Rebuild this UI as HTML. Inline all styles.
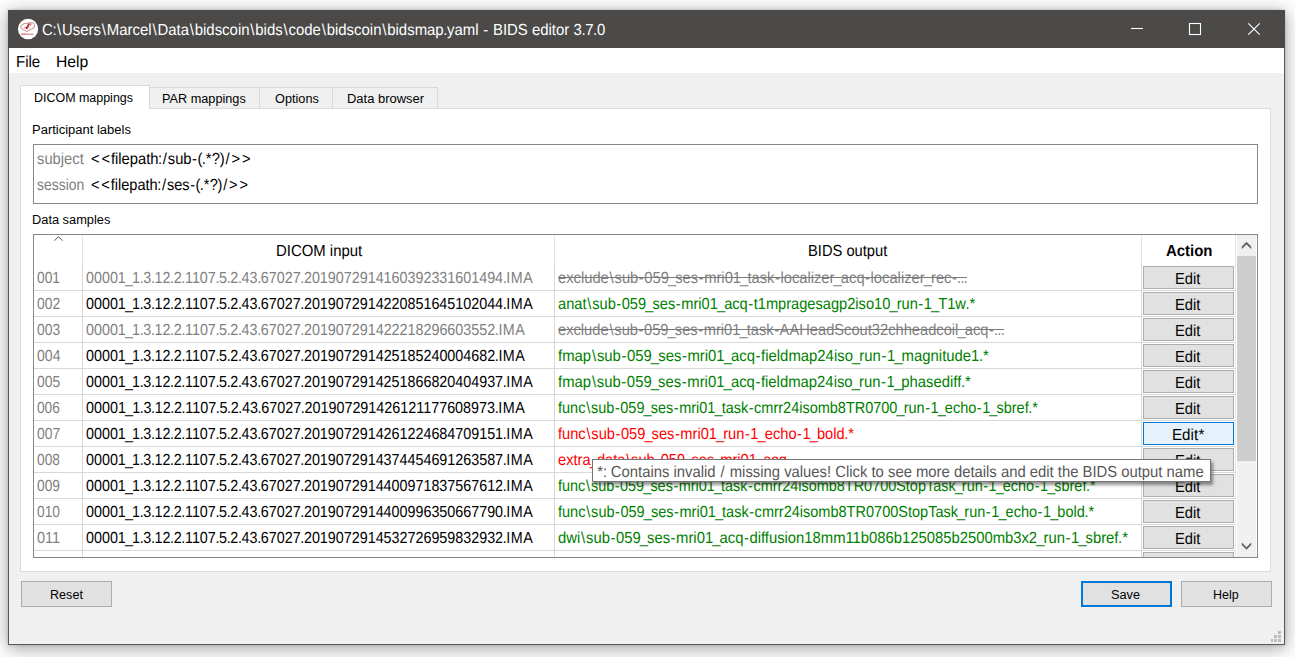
<!DOCTYPE html>
<html><head><meta charset="utf-8"><title>BIDS editor</title>
<style>
html,body{margin:0;padding:0;}
body{width:1295px;height:657px;overflow:hidden;background:#fff;position:relative;font-family:"Liberation Sans",sans-serif;}
.a{position:absolute;}
.t{position:absolute;white-space:nowrap;z-index:2;transform-origin:0 0;}
#win{left:8px;top:10px;width:1275px;height:633px;border:1px solid #5a5957;background:#f0f0f0;box-shadow:0 3px 17px 1px rgba(0,0,0,.34),0 0 3px rgba(0,0,0,.18);}
#tbar{left:8px;top:10px;width:1277px;height:38px;background:#4b4a48;}
#mbar{left:9px;top:48px;width:1275px;height:25px;background:#fff;}
#pane{left:20px;top:108px;width:1249px;height:462px;border:1px solid #dadada;background:#fff;}
.tab{background:#f0f0f0;border:1px solid #d9d9d9;border-bottom:none;box-sizing:border-box;}
#tabA{left:20px;top:85px;width:130px;height:24px;background:#fff;border:1px solid #d9d9d9;border-bottom:none;box-sizing:border-box;z-index:1;}
#pframe{left:33px;top:144px;width:1223px;height:58px;border:1px solid #828790;background:#fff;}
#tframe{left:33px;top:234px;width:1223px;height:322px;border:1px solid #828790;background:#fff;overflow:hidden;}
.hl{position:absolute;left:0;width:1201px;height:1px;background:#d8d8d8;}
.vl{position:absolute;top:30px;width:1px;height:300px;background:#d8d8d8;}
.vh{position:absolute;top:0;width:1px;height:30px;background:#e5e5e5;}
.eb{position:absolute;left:1109px;width:89px;height:21px;border:1px solid #adadad;background:#e1e1e1;}
.btn{border:1px solid #adadad;background:#e1e1e1;box-sizing:border-box;}
#tip{left:592px;top:459px;width:617px;height:21px;border:1px solid #767676;background:#fff;z-index:5;box-shadow:2px 3px 3px rgba(0,0,0,.42);}
#tip_t{z-index:6;}
#title{left:42.30px;top:18px;height:26px;line-height:26px;font-size:16px;color:#fff;transform:scaleX(0.9327);text-rendering:geometricPrecision;}
#mfile{left:16.48px;top:50px;height:26px;line-height:26px;font-size:16px;color:#000;transform:scaleX(0.9384);text-rendering:geometricPrecision;}
#mhelp{left:55.80px;top:50px;height:26px;line-height:26px;font-size:16px;color:#000;transform:scaleX(0.983);text-rendering:geometricPrecision;}
#tab1{left:34.40px;top:88px;height:21px;line-height:21px;font-size:12px;color:#000;transform:scaleX(1.0377);}
#tab2{left:162.20px;top:89px;height:21px;line-height:21px;font-size:12px;color:#000;transform:scaleX(1.0582);}
#tab3{left:274.96px;top:89px;height:21px;line-height:21px;font-size:12px;color:#000;transform:scaleX(1.0591);}
#tab4{left:347.30px;top:89px;height:21px;line-height:21px;font-size:12px;color:#000;transform:scaleX(1.0808);}
#plabel{left:32.30px;top:120px;height:21px;line-height:21px;font-size:12px;color:#000;transform:scaleX(1.0822);}
#dlabel{left:32.30px;top:210px;height:21px;line-height:21px;font-size:12px;color:#000;transform:scaleX(1.0676);}
#subj{left:36.76px;top:147px;height:26px;line-height:26px;font-size:16px;color:#808080;transform:scaleX(0.9229);text-rendering:geometricPrecision;}
#subjv{left:89.60px;top:147px;height:26px;line-height:26px;font-size:16px;color:#000;transform:scaleX(0.9217);text-rendering:geometricPrecision;}
#sess{left:36.80px;top:173px;height:26px;line-height:26px;font-size:16px;color:#808080;transform:scaleX(0.8715);text-rendering:geometricPrecision;}
#sessv{left:89.60px;top:173px;height:26px;line-height:26px;font-size:16px;color:#000;transform:scaleX(0.9116);text-rendering:geometricPrecision;}
#h1{left:275.88px;top:239px;height:26px;line-height:26px;font-size:16px;color:#000;transform:scaleX(0.932);text-rendering:geometricPrecision;}
#h2{left:807.89px;top:239px;height:26px;line-height:26px;font-size:16px;color:#000;transform:scaleX(0.9184);text-rendering:geometricPrecision;}
#h3{left:1166.13px;top:239px;height:26px;line-height:26px;font-size:16px;color:#000;transform:scaleX(0.934);font-weight:bold;text-rendering:geometricPrecision;}
#n001{left:36.93px;top:266px;height:26px;line-height:26px;font-size:16px;color:#808080;transform:scaleX(0.8593);text-rendering:geometricPrecision;}
#d001{left:85.69px;top:266px;height:26px;line-height:26px;font-size:16px;color:#808080;transform:scaleX(0.8951);text-rendering:geometricPrecision;}
#b001{left:558.02px;top:266px;height:26px;line-height:26px;font-size:16px;color:#808080;transform:scaleX(0.9209);text-rendering:geometricPrecision;}
#e001{left:1174.79px;top:267px;height:26px;line-height:26px;font-size:16px;color:#000;transform:scaleX(0.9186);text-rendering:geometricPrecision;}
#n002{left:36.93px;top:292px;height:26px;line-height:26px;font-size:16px;color:#808080;transform:scaleX(0.8649);text-rendering:geometricPrecision;}
#d002{left:85.69px;top:292px;height:26px;line-height:26px;font-size:16px;color:#000;transform:scaleX(0.8951);text-rendering:geometricPrecision;}
#b002{left:557.99px;top:292px;height:26px;line-height:26px;font-size:16px;color:#008000;transform:scaleX(0.9146);text-rendering:geometricPrecision;}
#e002{left:1174.79px;top:293px;height:26px;line-height:26px;font-size:16px;color:#000;transform:scaleX(0.9186);text-rendering:geometricPrecision;}
#n003{left:36.93px;top:318px;height:26px;line-height:26px;font-size:16px;color:#808080;transform:scaleX(0.8645);text-rendering:geometricPrecision;}
#d003{left:85.69px;top:318px;height:26px;line-height:26px;font-size:16px;color:#808080;transform:scaleX(0.8952);text-rendering:geometricPrecision;}
#b003{left:558.02px;top:318px;height:26px;line-height:26px;font-size:16px;color:#808080;transform:scaleX(0.9176);text-rendering:geometricPrecision;}
#e003{left:1174.79px;top:319px;height:26px;line-height:26px;font-size:16px;color:#000;transform:scaleX(0.9186);text-rendering:geometricPrecision;}
#n004{left:36.90px;top:344px;height:26px;line-height:26px;font-size:16px;color:#808080;transform:scaleX(0.8792);text-rendering:geometricPrecision;}
#d004{left:85.69px;top:344px;height:26px;line-height:26px;font-size:16px;color:#000;transform:scaleX(0.8952);text-rendering:geometricPrecision;}
#b004{left:558.04px;top:344px;height:26px;line-height:26px;font-size:16px;color:#008000;transform:scaleX(0.93);text-rendering:geometricPrecision;}
#e004{left:1174.79px;top:345px;height:26px;line-height:26px;font-size:16px;color:#000;transform:scaleX(0.9186);text-rendering:geometricPrecision;}
#n005{left:36.93px;top:370px;height:26px;line-height:26px;font-size:16px;color:#808080;transform:scaleX(0.8649);text-rendering:geometricPrecision;}
#d005{left:85.69px;top:370px;height:26px;line-height:26px;font-size:16px;color:#000;transform:scaleX(0.8951);text-rendering:geometricPrecision;}
#b005{left:558.04px;top:370px;height:26px;line-height:26px;font-size:16px;color:#008000;transform:scaleX(0.9291);text-rendering:geometricPrecision;}
#e005{left:1174.79px;top:371px;height:26px;line-height:26px;font-size:16px;color:#000;transform:scaleX(0.9186);text-rendering:geometricPrecision;}
#n006{left:36.93px;top:396px;height:26px;line-height:26px;font-size:16px;color:#808080;transform:scaleX(0.8566);text-rendering:geometricPrecision;}
#d006{left:85.69px;top:396px;height:26px;line-height:26px;font-size:16px;color:#000;transform:scaleX(0.8973);text-rendering:geometricPrecision;}
#b006{left:558.06px;top:396px;height:26px;line-height:26px;font-size:16px;color:#008000;transform:scaleX(0.9054);text-rendering:geometricPrecision;}
#e006{left:1174.79px;top:397px;height:26px;line-height:26px;font-size:16px;color:#000;transform:scaleX(0.9186);text-rendering:geometricPrecision;}
#n007{left:36.93px;top:422px;height:26px;line-height:26px;font-size:16px;color:#808080;transform:scaleX(0.8649);text-rendering:geometricPrecision;}
#d007{left:85.69px;top:422px;height:26px;line-height:26px;font-size:16px;color:#000;transform:scaleX(0.8951);text-rendering:geometricPrecision;}
#b007{left:558.04px;top:422px;height:26px;line-height:26px;font-size:16px;color:#ff0000;transform:scaleX(0.9142);text-rendering:geometricPrecision;}
#e007{left:1172.05px;top:423px;height:26px;line-height:26px;font-size:16px;color:#000;transform:scaleX(0.9467);text-rendering:geometricPrecision;}
#n008{left:36.93px;top:448px;height:26px;line-height:26px;font-size:16px;color:#808080;transform:scaleX(0.8595);text-rendering:geometricPrecision;}
#d008{left:85.69px;top:448px;height:26px;line-height:26px;font-size:16px;color:#000;transform:scaleX(0.8951);text-rendering:geometricPrecision;}
#b008{left:558.02px;top:448px;height:26px;line-height:26px;font-size:16px;color:#ff0000;transform:scaleX(0.9155);text-rendering:geometricPrecision;}
#e008{left:1174.79px;top:449px;height:26px;line-height:26px;font-size:16px;color:#000;transform:scaleX(0.9186);text-rendering:geometricPrecision;}
#n009{left:36.93px;top:474px;height:26px;line-height:26px;font-size:16px;color:#808080;transform:scaleX(0.8602);text-rendering:geometricPrecision;}
#d009{left:85.69px;top:474px;height:26px;line-height:26px;font-size:16px;color:#000;transform:scaleX(0.8951);text-rendering:geometricPrecision;}
#b009{left:558.06px;top:474px;height:26px;line-height:26px;font-size:16px;color:#008000;transform:scaleX(0.9022);text-rendering:geometricPrecision;}
#e009{left:1174.79px;top:475px;height:26px;line-height:26px;font-size:16px;color:#000;transform:scaleX(0.9186);text-rendering:geometricPrecision;}
#n010{left:36.93px;top:500px;height:26px;line-height:26px;font-size:16px;color:#808080;transform:scaleX(0.8606);text-rendering:geometricPrecision;}
#d010{left:85.69px;top:500px;height:26px;line-height:26px;font-size:16px;color:#000;transform:scaleX(0.8951);text-rendering:geometricPrecision;}
#b010{left:558.06px;top:500px;height:26px;line-height:26px;font-size:16px;color:#008000;transform:scaleX(0.9077);text-rendering:geometricPrecision;}
#e010{left:1174.79px;top:501px;height:26px;line-height:26px;font-size:16px;color:#000;transform:scaleX(0.9186);text-rendering:geometricPrecision;}
#n011{left:36.89px;top:526px;height:26px;line-height:26px;font-size:16px;color:#808080;transform:scaleX(0.9071);text-rendering:geometricPrecision;}
#d011{left:85.69px;top:526px;height:26px;line-height:26px;font-size:16px;color:#000;transform:scaleX(0.8951);text-rendering:geometricPrecision;}
#b011{left:558.02px;top:526px;height:26px;line-height:26px;font-size:16px;color:#008000;transform:scaleX(0.9256);text-rendering:geometricPrecision;}
#e011{left:1174.79px;top:527px;height:26px;line-height:26px;font-size:16px;color:#000;transform:scaleX(0.9186);text-rendering:geometricPrecision;}
#reset{left:49.50px;top:585px;height:21px;line-height:21px;font-size:12px;color:#000;transform:scaleX(1.0488);}
#save{left:1111.40px;top:585px;height:21px;line-height:21px;font-size:12px;color:#000;transform:scaleX(1.0597);}
#help{left:1213.20px;top:585px;height:21px;line-height:21px;font-size:12px;color:#000;transform:scaleX(1.0361);}
#tip_t{left:597.34px;top:460px;height:26px;line-height:26px;font-size:16px;color:#575757;transform:scaleX(0.9268);text-rendering:geometricPrecision;}
.t i{font-style:normal}.w5{letter-spacing:.5px}.k12{margin:0 0.6px}.k18{margin:0 0.9px}.k20{margin:0 1.0px}.k6{margin:0 0.3px}.m20{margin:0 -1.0px}.m4{margin:0 -0.2px}.m8{margin:0 -0.4px}
</style></head><body>
<div id="win" class="a"></div>
<div id="tbar" class="a"></div>
<div id="mbar" class="a"></div>

<!-- title icon -->
<svg class="a" style="left:17px;top:18px" width="22" height="22" viewBox="0 0 22 22">
 <ellipse cx="11.05" cy="10.95" rx="10.1" ry="10.3" fill="#fff"/>
 <g transform="translate(10.6,5.6) scale(.91,.92) translate(-10.6,-4.8)"><path d="M3.4 7.600C4.200 5.800 6.200 5 8.100 4.700C10.500 4.100 13.400 3.900 15.700 4C17.200 4.100 17.900 4.800 17.900 5.600C18.200 6.700 18.300 7.900 18 9C15.400 10.700 12.300 12 9.500 13.400C8.900 13.200 8.500 12.700 7.900 12.300C6.200 11.600 4.300 10.700 3.400 9.400C3.100 8.800 3.200 8.100 3.400 7.600Z" fill="#fff" stroke="#b84848" stroke-width=".75" stroke-linejoin="round"/>
 <path d="M9.300 10l2.700-4.600" stroke="#ad1a1a" stroke-width="1.700" stroke-linecap="round" fill="none"/>
 <path d="M7.300 9.300l1.200-.3M10.400 10.200l1.600-2.200M13.600 6.800l1-.9M12.900 5.600l1.200-.3" stroke="#c0392b" stroke-width=".8" stroke-linecap="round" fill="none"/></g>
 <text x="4.200" y="16.800" font-family="Liberation Sans, sans-serif" font-weight="bold" font-size="2.500" text-rendering="geometricPrecision" textLength="12.600" lengthAdjust="spacingAndGlyphs" fill="#c62828">BIDScoin</text>
</svg>

<!-- caption buttons -->
<svg class="a" style="left:1120px;top:10px" width="165" height="38" viewBox="0 0 165 38">
 <path d="M11 18.500h12" stroke="#fff" stroke-width="1.100"/>
 <rect x="69.500" y="13.500" width="11" height="11" fill="none" stroke="#fff" stroke-width="1.100"/>
 <path d="M128.300 13.300l11.400 11.400M139.700 13.300l-11.400 11.400" stroke="#fff" stroke-width="1.150"/>
</svg>

<!-- tabs -->
<div class="a tab" style="left:149px;top:87px;width:111px;height:22px"></div>
<div class="a tab" style="left:259px;top:87px;width:74px;height:22px"></div>
<div class="a tab" style="left:332px;top:87px;width:106px;height:22px"></div>
<div id="pane" class="a"></div>
<div id="tabA" class="a"></div>

<div id="pframe" class="a"></div>

<div id="tframe" class="a">
 <!-- header separators -->
 <div class="vh" style="left:48px"></div><div class="vh" style="left:520px"></div><div class="vh" style="left:1107px"></div>
 <div class="vl" style="left:48px"></div><div class="vl" style="left:520px"></div><div class="vl" style="left:1107px"></div>
 <div class="vl" style="left:1201px;top:0;height:322px;background:#e5e5e5"></div>
 <div class="hl" style="top:55px"></div>
<div class="hl" style="top:81px"></div>
<div class="hl" style="top:107px"></div>
<div class="hl" style="top:133px"></div>
<div class="hl" style="top:159px"></div>
<div class="hl" style="top:185px"></div>
<div class="hl" style="top:211px"></div>
<div class="hl" style="top:237px"></div>
<div class="hl" style="top:263px"></div>
<div class="hl" style="top:289px"></div>
<div class="hl" style="top:315px"></div>
<div class="eb" style="top:31px"></div>
<div class="eb" style="top:57px"></div>
<div class="eb" style="top:83px"></div>
<div class="eb" style="top:109px"></div>
<div class="eb" style="top:135px"></div>
<div class="eb" style="top:161px"></div>
<div class="eb" style="top:187px;background:#e5f1fb;border-color:#0078d7"></div>
<div class="eb" style="top:213px"></div>
<div class="eb" style="top:239px"></div>
<div class="eb" style="top:265px"></div>
<div class="eb" style="top:291px"></div>
<div class="eb" style="top:317px"></div>
 <!-- sort arrow -->
 <svg class="a" style="left:18px;top:0" width="14" height="8" viewBox="0 0 14 8"><path d="M2.500 5.700l4-4 4 4" fill="none" stroke="#4a4a4a" stroke-width="1"/></svg>
 <!-- scrollbar -->
 <div class="a" style="left:1203px;top:0;width:19px;height:322px;background:#f0f0f0"></div>
 <div class="a" style="left:1203px;top:21px;width:19px;height:205px;background:#cdcdcd"></div>
 <svg class="a" style="left:1203px;top:0" width="19" height="21" viewBox="0 0 19 21"><path d="M4.800 14.100V11.500L9.500 6.800L14.200 11.500V14.100L9.500 9.400Z" fill="#606060"/></svg>
 <svg class="a" style="left:1203px;top:301px" width="19" height="21" viewBox="0 0 19 21"><path d="M4.800 6.500L9.500 11.200L14.200 6.500V9.100L9.500 13.800L4.800 9.100Z" fill="#606060"/></svg>
</div>

<!-- bottom buttons -->
<div class="a btn" style="left:21px;top:581px;width:91px;height:26px"></div>
<div class="a btn" style="left:1081px;top:581px;width:91px;height:26px;border:2px solid #0078d7"></div>
<div class="a btn" style="left:1181px;top:581px;width:91px;height:26px"></div>

<!-- size grip -->
<svg class="a" style="left:1270px;top:631px" width="11" height="11" viewBox="0 0 11 11" fill="#bcbcbc">
 <rect x="8" y="0" width="3" height="3"/><rect x="4" y="4" width="3" height="3"/><rect x="8" y="4" width="3" height="3"/>
 <rect x="1" y="8" width="2" height="3"/><rect x="4" y="8" width="3" height="3"/><rect x="8" y="8" width="3" height="3"/>
</svg>

<!-- strike-through lines for excluded rows -->
<div class="a" style="left:558px;top:277px;width:409px;height:1px;background:#7a7a7a;z-index:3"></div>
<div class="a" style="left:558px;top:329px;width:446px;height:1px;background:#7a7a7a;z-index:3"></div>

<!-- tooltip -->
<div id="tip" class="a"></div>

<span class="t" id="title">C<i class="m8">:</i><i class="k18">\</i>Users<i class="k18">\</i>Marcel<i class="k18">\</i>Data<i class="k18">\</i>bidscoin<i class="k18">\</i>bids<i class="k18">\</i>code<i class="k18">\</i>bidscoin<i class="k18">\</i>bidsmap<i class="m8">.</i>yaml <i class="k12">-</i> BIDS editor 3<i class="m8">.</i>7<i class="m8">.</i>0</span>
<span class="t" id="mfile">File</span>
<span class="t" id="mhelp">Help</span>
<span class="t" id="tab1">DICOM mappings</span>
<span class="t" id="tab2">PAR mappings</span>
<span class="t" id="tab3">Options</span>
<span class="t" id="tab4">Data browser</span>
<span class="t" id="plabel">Participant labels</span>
<span class="t" id="dlabel">Data samples</span>
<span class="t" id="subj">subject</span>
<span class="t" id="subjv"><i class="k20">&lt;</i><i class="k20">&lt;</i>filepath<i class="m8">:</i><i class="k20">/</i>sub<i class="k12">-</i><i class="m4">(</i><i class="m8">.</i><i class="k6">*</i>?<i class="m4">)</i><i class="k20">/</i><i class="k20">&gt;</i><i class="k20">&gt;</i></span>
<span class="t" id="sess">session</span>
<span class="t" id="sessv"><i class="k20">&lt;</i><i class="k20">&lt;</i>filepath<i class="m8">:</i><i class="k20">/</i>ses<i class="k12">-</i><i class="m4">(</i><i class="m8">.</i><i class="k6">*</i>?<i class="m4">)</i><i class="k20">/</i><i class="k20">&gt;</i><i class="k20">&gt;</i></span>
<span class="t" id="h1">DICOM input</span>
<span class="t" id="h2">BIDS output</span>
<span class="t" id="h3">Action</span>
<span class="t" id="n001">001</span>
<span class="t" id="d001">00001<i class="m20">_</i>1<i class="m8">.</i>3<i class="m8">.</i>12<i class="m8">.</i>2<i class="m8">.</i>1107<i class="m8">.</i>5<i class="m8">.</i>2<i class="m8">.</i>43<i class="m8">.</i>67027<i class="m8">.</i>2019072914160392331601494<i class="m8">.</i><i class="w5">IMA</i></span>
<span class="t" id="b001">exclude<i class="k18">\</i>sub<i class="k12">-</i>059<i class="m20">_</i>ses<i class="k12">-</i>mri01<i class="m20">_</i>task<i class="k12">-</i>localizer<i class="m20">_</i>acq<i class="k12">-</i>localizer<i class="m20">_</i>rec<i class="k12">-</i><i class="m8">.</i><i class="m8">.</i><i class="m8">.</i></span>
<span class="t" id="e001">Edit</span>
<span class="t" id="n002">002</span>
<span class="t" id="d002">00001<i class="m20">_</i>1<i class="m8">.</i>3<i class="m8">.</i>12<i class="m8">.</i>2<i class="m8">.</i>1107<i class="m8">.</i>5<i class="m8">.</i>2<i class="m8">.</i>43<i class="m8">.</i>67027<i class="m8">.</i>2019072914220851645102044<i class="m8">.</i><i class="w5">IMA</i></span>
<span class="t" id="b002">anat<i class="k18">\</i>sub<i class="k12">-</i>059<i class="m20">_</i>ses<i class="k12">-</i>mri01<i class="m20">_</i>acq<i class="k12">-</i>t1mpragesagp2iso10<i class="m20">_</i>run<i class="k12">-</i>1<i class="m20">_</i>T1w<i class="m8">.</i><i class="k6">*</i></span>
<span class="t" id="e002">Edit</span>
<span class="t" id="n003">003</span>
<span class="t" id="d003">00001<i class="m20">_</i>1<i class="m8">.</i>3<i class="m8">.</i>12<i class="m8">.</i>2<i class="m8">.</i>1107<i class="m8">.</i>5<i class="m8">.</i>2<i class="m8">.</i>43<i class="m8">.</i>67027<i class="m8">.</i>201907291422218296603552<i class="m8">.</i><i class="w5">IMA</i></span>
<span class="t" id="b003">exclude<i class="k18">\</i>sub<i class="k12">-</i>059<i class="m20">_</i>ses<i class="k12">-</i>mri01<i class="m20">_</i>task<i class="k12">-</i>AAHeadScout32chheadcoil<i class="m20">_</i>acq<i class="k12">-</i><i class="m8">.</i><i class="m8">.</i><i class="m8">.</i></span>
<span class="t" id="e003">Edit</span>
<span class="t" id="n004">004</span>
<span class="t" id="d004">00001<i class="m20">_</i>1<i class="m8">.</i>3<i class="m8">.</i>12<i class="m8">.</i>2<i class="m8">.</i>1107<i class="m8">.</i>5<i class="m8">.</i>2<i class="m8">.</i>43<i class="m8">.</i>67027<i class="m8">.</i>201907291425185240004682<i class="m8">.</i><i class="w5">IMA</i></span>
<span class="t" id="b004">fmap<i class="k18">\</i>sub<i class="k12">-</i>059<i class="m20">_</i>ses<i class="k12">-</i>mri01<i class="m20">_</i>acq<i class="k12">-</i>fieldmap24iso<i class="m20">_</i>run<i class="k12">-</i>1<i class="m20">_</i>magnitude1<i class="m8">.</i><i class="k6">*</i></span>
<span class="t" id="e004">Edit</span>
<span class="t" id="n005">005</span>
<span class="t" id="d005">00001<i class="m20">_</i>1<i class="m8">.</i>3<i class="m8">.</i>12<i class="m8">.</i>2<i class="m8">.</i>1107<i class="m8">.</i>5<i class="m8">.</i>2<i class="m8">.</i>43<i class="m8">.</i>67027<i class="m8">.</i>2019072914251866820404937<i class="m8">.</i><i class="w5">IMA</i></span>
<span class="t" id="b005">fmap<i class="k18">\</i>sub<i class="k12">-</i>059<i class="m20">_</i>ses<i class="k12">-</i>mri01<i class="m20">_</i>acq<i class="k12">-</i>fieldmap24iso<i class="m20">_</i>run<i class="k12">-</i>1<i class="m20">_</i>phasediff<i class="m8">.</i><i class="k6">*</i></span>
<span class="t" id="e005">Edit</span>
<span class="t" id="n006">006</span>
<span class="t" id="d006">00001<i class="m20">_</i>1<i class="m8">.</i>3<i class="m8">.</i>12<i class="m8">.</i>2<i class="m8">.</i>1107<i class="m8">.</i>5<i class="m8">.</i>2<i class="m8">.</i>43<i class="m8">.</i>67027<i class="m8">.</i>201907291426121177608973<i class="m8">.</i><i class="w5">IMA</i></span>
<span class="t" id="b006">func<i class="k18">\</i>sub<i class="k12">-</i>059<i class="m20">_</i>ses<i class="k12">-</i>mri01<i class="m20">_</i>task<i class="k12">-</i>cmrr24isomb8TR0700<i class="m20">_</i>run<i class="k12">-</i>1<i class="m20">_</i>echo<i class="k12">-</i>1<i class="m20">_</i>sbref<i class="m8">.</i><i class="k6">*</i></span>
<span class="t" id="e006">Edit</span>
<span class="t" id="n007">007</span>
<span class="t" id="d007">00001<i class="m20">_</i>1<i class="m8">.</i>3<i class="m8">.</i>12<i class="m8">.</i>2<i class="m8">.</i>1107<i class="m8">.</i>5<i class="m8">.</i>2<i class="m8">.</i>43<i class="m8">.</i>67027<i class="m8">.</i>2019072914261224684709151<i class="m8">.</i><i class="w5">IMA</i></span>
<span class="t" id="b007">func<i class="k18">\</i>sub<i class="k12">-</i>059<i class="m20">_</i>ses<i class="k12">-</i>mri01<i class="m20">_</i>run<i class="k12">-</i>1<i class="m20">_</i>echo<i class="k12">-</i>1<i class="m20">_</i>bold<i class="m8">.</i><i class="k6">*</i></span>
<span class="t" id="e007">Edit<i class="k6">*</i></span>
<span class="t" id="n008">008</span>
<span class="t" id="d008">00001<i class="m20">_</i>1<i class="m8">.</i>3<i class="m8">.</i>12<i class="m8">.</i>2<i class="m8">.</i>1107<i class="m8">.</i>5<i class="m8">.</i>2<i class="m8">.</i>43<i class="m8">.</i>67027<i class="m8">.</i>2019072914374454691263587<i class="m8">.</i><i class="w5">IMA</i></span>
<span class="t" id="b008">extra<i class="m20">_</i>data<i class="k18">\</i>sub<i class="k12">-</i>059<i class="m20">_</i>ses<i class="k12">-</i>mri01<i class="m20">_</i>acq<i class="k12">-</i><i class="m8">.</i><i class="m8">.</i><i class="m8">.</i></span>
<span class="t" id="e008">Edit</span>
<span class="t" id="n009">009</span>
<span class="t" id="d009">00001<i class="m20">_</i>1<i class="m8">.</i>3<i class="m8">.</i>12<i class="m8">.</i>2<i class="m8">.</i>1107<i class="m8">.</i>5<i class="m8">.</i>2<i class="m8">.</i>43<i class="m8">.</i>67027<i class="m8">.</i>2019072914400971837567612<i class="m8">.</i><i class="w5">IMA</i></span>
<span class="t" id="b009">func<i class="k18">\</i>sub<i class="k12">-</i>059<i class="m20">_</i>ses<i class="k12">-</i>mri01<i class="m20">_</i>task<i class="k12">-</i>cmrr24isomb8TR0700StopTask<i class="m20">_</i>run<i class="k12">-</i>1<i class="m20">_</i>echo<i class="k12">-</i>1<i class="m20">_</i>sbref<i class="m8">.</i><i class="k6">*</i></span>
<span class="t" id="e009">Edit</span>
<span class="t" id="n010">010</span>
<span class="t" id="d010">00001<i class="m20">_</i>1<i class="m8">.</i>3<i class="m8">.</i>12<i class="m8">.</i>2<i class="m8">.</i>1107<i class="m8">.</i>5<i class="m8">.</i>2<i class="m8">.</i>43<i class="m8">.</i>67027<i class="m8">.</i>2019072914400996350667790<i class="m8">.</i><i class="w5">IMA</i></span>
<span class="t" id="b010">func<i class="k18">\</i>sub<i class="k12">-</i>059<i class="m20">_</i>ses<i class="k12">-</i>mri01<i class="m20">_</i>task<i class="k12">-</i>cmrr24isomb8TR0700StopTask<i class="m20">_</i>run<i class="k12">-</i>1<i class="m20">_</i>echo<i class="k12">-</i>1<i class="m20">_</i>bold<i class="m8">.</i><i class="k6">*</i></span>
<span class="t" id="e010">Edit</span>
<span class="t" id="n011">011</span>
<span class="t" id="d011">00001<i class="m20">_</i>1<i class="m8">.</i>3<i class="m8">.</i>12<i class="m8">.</i>2<i class="m8">.</i>1107<i class="m8">.</i>5<i class="m8">.</i>2<i class="m8">.</i>43<i class="m8">.</i>67027<i class="m8">.</i>2019072914532726959832932<i class="m8">.</i><i class="w5">IMA</i></span>
<span class="t" id="b011">dwi<i class="k18">\</i>sub<i class="k12">-</i>059<i class="m20">_</i>ses<i class="k12">-</i>mri01<i class="m20">_</i>acq<i class="k12">-</i>diffusion18mm11b086b125085b2500mb3x2<i class="m20">_</i>run<i class="k12">-</i>1<i class="m20">_</i>sbref<i class="m8">.</i><i class="k6">*</i></span>
<span class="t" id="e011">Edit</span>
<span class="t" id="reset">Reset</span>
<span class="t" id="save">Save</span>
<span class="t" id="help">Help</span>
<span class="t" id="tip_t"><i class="k6">*</i><i class="m8">:</i> Contains invalid <i class="k20">/</i> missing values! Click to see more details and edit the BIDS output name</span>
</body></html>
